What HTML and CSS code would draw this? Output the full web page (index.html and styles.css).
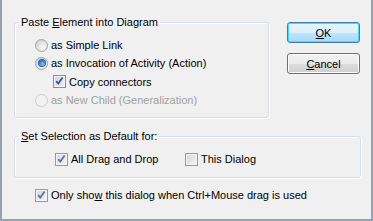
FILE: index.html
```html
<!DOCTYPE html>
<html>
<head>
<meta charset="utf-8">
<link rel="stylesheet" href="styles.css">
</head>
<body>
<div class="dialog">
  <div class="top">
    <fieldset class="group g1">
      <legend>Paste <u>E</u>lement into Diagram</legend>
      <div class="opt"><span class="radio"></span><span>as Simple Link</span></div>
      <div class="opt"><span class="radio on"><span class="dot"></span></span><span>as Invocation of Activity (Action)</span></div>
      <div class="opt sub"><span class="check"><svg viewBox="0 0 11 11" width="11" height="11"><path d="M2.2 5.2 L4.3 7.6 L8.6 1.6" fill="none" stroke="#3a57a0" stroke-width="1.8"/></svg></span><span>Copy connectors</span></div>
      <div class="opt dis"><span class="radio off"></span><span>as New Child (Generalization)</span></div>
    </fieldset>
    <div class="buttons">
      <button class="btn default"><u>O</u>K</button>
      <button class="btn"><u>C</u>ancel</button>
    </div>
  </div>
  <fieldset class="group g2">
    <legend><u>S</u>et Selection as Default for:</legend>
    <div class="row">
      <div class="opt c1"><span class="check soft"><svg viewBox="0 0 11 11" width="11" height="11"><path d="M2.2 5.2 L4.3 7.6 L8.6 1.6" fill="none" stroke="#5a72a8" stroke-width="1.8"/></svg></span><span>All Drag and Drop</span></div>
      <div class="opt c2"><span class="check soft"></span><span>This Dialog</span></div>
    </div>
  </fieldset>
  <div class="opt last"><span class="check soft"><svg viewBox="0 0 11 11" width="11" height="11"><path d="M2.2 5.2 L4.3 7.6 L8.6 1.6" fill="none" stroke="#5a72a8" stroke-width="1.8"/></svg></span><span>Only sho<u>w</u> this dialog when Ctrl+Mouse drag is used</span></div>
</div>
</body>
</html>
```

FILE: styles.css
```css
html, body {
  margin: 0;
  padding: 0;
  background: #f0f0f0;
}
body {
  width: 373px;
  height: 221px;
  overflow: hidden;
  font-family: "Liberation Sans", Arial, sans-serif;
  font-size: 11px;
  color: #000;
}
u { text-decoration: underline; text-underline-offset: 1px; }
.dialog {
  box-sizing: border-box;
  width: 373px;
  height: 221px;
  border-left: 2px solid #96a3b2;
  border-right: 2px solid #96a3b2;
  border-bottom: 2px solid #96a3b2;
  padding: 0 0 0 12px;
  display: flex;
  flex-direction: column;
}
.top {
  display: flex;
  align-items: flex-start;
}
.group {
  margin: 0;
  border: 1px solid #d5dfe5;
  border-radius: 3px;
  box-shadow: 1px 1px 0 #fff, inset 1px 1px 0 #fff;
  min-width: 0;
}
.group legend {
  padding: 0 2px;
  line-height: 14px;
}
.g1 {
  margin-top: 15px;
  width: 255px;
  box-sizing: border-box;
  padding: 7px 0 8px 20px;
}
.g1 legend { margin-left: -16px; }
.opt {
  display: flex;
  align-items: center;
  height: 18px;
  white-space: nowrap;
}
.opt.sub { padding-left: 18px; height: 19px; }
.opt.dis { color: #a0a0a0; }
.radio {
  box-sizing: border-box;
  width: 13px;
  height: 13px;
  border-radius: 50%;
  border: 1px solid #a3a3a3;
  background: radial-gradient(circle at 65% 70%, #f8f8f8 0, #e2e2e2 50%, #c8c8c8 100%);
  margin-right: 3px;
  display: flex;
  align-items: center;
  justify-content: center;
  flex: none;
}
.radio.off {
  border-color: #cfcfcf;
  background: #f2f2f2;
}
.dot {
  width: 6px;
  height: 6px;
  border-radius: 50%;
  background: radial-gradient(circle at 60% 65%, #8ad0f7 0, #2f7bd1 55%, #1a3f86 100%);
  box-shadow: 0 0 0 1px #2a5fa8;
}
.check {
  box-sizing: border-box;
  width: 13px;
  height: 13px;
  border: 1px solid #8e8f8f;
  background: linear-gradient(135deg, #d0d3d8 0, #f4f4f4 100%);
  box-shadow: inset 0 0 0 1px #f4f4f4;
  margin-right: 3px;
  display: flex;
  align-items: center;
  justify-content: center;
  flex: none;
}
.check.soft {
  border-color: #9a9a9a;
  background: linear-gradient(135deg, #d6d6d6 0, #f6f6f6 100%);
}
.check svg { display: block; }
.buttons {
  display: flex;
  flex-direction: column;
  gap: 10px;
  margin-left: 18px;
  margin-top: 22px;
}
.btn {
  box-sizing: border-box;
  width: 73px;
  height: 21px;
  padding: 0;
  font: inherit;
  color: #000;
  border: 1px solid #707070;
  border-radius: 3px;
  background: linear-gradient(to bottom, #f2f2f2 0, #ebebeb 50%, #dddddd 50%, #cfcfcf 100%);
  box-shadow: inset 0 0 0 1px #fcfcfc;
}
.btn.default {
  border-color: #3c7fb1;
  background: linear-gradient(to bottom, #eaf6fd 0, #d9f0fc 50%, #bee6fd 50%, #a7d9f5 100%);
  box-shadow: inset 0 0 0 1px #48d8fb;
}
.g2 {
  margin-top: 11px;
  width: 347px;
  box-sizing: border-box;
  padding: 7px 0 9px 40px;
}
.g2 legend { margin-left: -36px; }
.row {
  display: flex;
}
.c1 { width: 130px; }
.opt.last {
  margin-top: 8px;
  padding-left: 21px;
}
```
